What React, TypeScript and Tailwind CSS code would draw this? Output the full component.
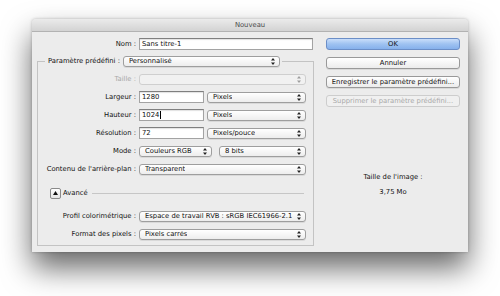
import clsx from "clsx"
import type { ReactNode } from "react"

function Arrows({ dim }: { dim?: boolean }) {
  return (
    <svg width="4" height="7" viewBox="0 0 4 7" className={dim ? "opacity-40" : ""}>
      <path d="M2 0 L4 2.5 L0 2.5 Z M2 7 L4 4.5 L0 4.5 Z" fill="#222" />
    </svg>
  )
}

function Select({ value, className, disabled }: { value?: string; className?: string; disabled?: boolean }) {
  return (
    <div
      className={clsx(
        "flex h-[11px] shrink-0 items-center justify-between rounded-[3px] border pl-[5px] pr-[4px]",
        disabled
          ? "border-[#cfcfcf] bg-[#f1f1f1] text-[#a6a6a6]"
          : "border-[#9e9e9e] bg-gradient-to-b from-white to-[#ededed] text-[#111] shadow-[0_1px_0_rgba(0,0,0,0.08)]",
        className
      )}
    >
      <span className="truncate">{value}</span>
      <Arrows dim={disabled} />
    </div>
  )
}

function Input({ value, className, caret }: { value: string; className?: string; caret?: boolean }) {
  return (
    <div
      className={clsx(
        "flex h-[12px] shrink-0 items-center border border-[#a3a3a3] border-t-[#7f7f7f] bg-white pl-[2px] text-[#111] shadow-[inset_0_1px_1px_rgba(0,0,0,0.12)]",
        className
      )}
    >
      {value}
      {caret && <span className="ml-px h-[8px] w-px bg-black" />}
    </div>
  )
}

function Row({ label, children, dim, className }: { label: string; children: ReactNode; dim?: boolean; className?: string }) {
  return (
    <div className={clsx("flex h-[18px] items-center", className)}>
      <div className={clsx("w-[101px] shrink-0 pr-[3px] text-right", dim ? "text-[#a8a8a8]" : "text-[#111]")}>{label}</div>
      {children}
    </div>
  )
}

function Button({ children, primary, disabled }: { children: ReactNode; primary?: boolean; disabled?: boolean }) {
  return (
    <div
      className={clsx(
        "mb-[7px] flex h-[12px] items-center justify-center whitespace-nowrap rounded-[3px] border",
        primary
          ? "border-[#6b8ec7] bg-gradient-to-b from-[#c9defa] via-[#9fc2f1] to-[#86b1ec] text-[#111]"
          : disabled
            ? "border-[#cdcdcd] bg-[#f0f0f0] text-[#a9a9a9]"
            : "border-[#999] bg-gradient-to-b from-white to-[#ececec] text-[#111] shadow-[0_1px_0_rgba(0,0,0,0.08)]"
      )}
    >
      {children}
    </div>
  )
}

export default function App() {
  return (
    <div className="h-[296px] w-[500px] overflow-hidden bg-white pl-[32px] pt-[19px] text-[6.8px] leading-none" style={{ fontFamily: '"DejaVu Sans", Verdana, sans-serif' }}>
      <div className="flex h-[233px] w-[436px] flex-col rounded-t-[4px] bg-[#ececec] shadow-[0_16px_30px_rgba(0,0,0,0.6),0_0_3px_rgba(0,0,0,0.25)]">
        {/* Title bar */}
        <div className="flex h-[13px] items-center justify-center rounded-t-[4px] border-b border-[#b2b2b2] bg-gradient-to-b from-[#ebebeb] to-[#d3d3d3] text-[#4a4a4a]">
          Nouveau
        </div>

        <div className="flex flex-1 pl-[5px]">
          {/* Left column */}
          <div className="w-[277px] shrink-0">
            <div className="mt-[3px] flex h-[18px] items-center">
              <div className="w-[102px] shrink-0 pr-[3px] text-right text-[#111]">Nom :</div>
              <Input value="Sans titre-1" className="w-[174px]" />
            </div>

            <div className="mt-[8px] w-[277px] border border-[#c3c3c3] pb-[2px]">
              <div className="-mt-[7px] ml-[7px] flex h-[12px] w-fit items-center bg-[#ececec] px-[3px] pr-[2px]">
                <span className="text-[#111]">Paramètre prédéfini :</span>
                <Select value="Personnalisé" className="ml-[3px] w-[157px]" />
              </div>

              <Row label="Taille :" dim className="mt-[3px]">
                <Select disabled className="w-[167px]" />
              </Row>
              <Row label="Largeur :">
                <Input value="1280" className="w-[65px]" />
                <Select value="Pixels" className="ml-[3px] w-[99px]" />
              </Row>
              <Row label="Hauteur :">
                <Input value="1024" caret className="w-[65px]" />
                <Select value="Pixels" className="ml-[3px] w-[99px]" />
              </Row>
              <Row label="Résolution :">
                <Input value="72" className="w-[65px]" />
                <Select value="Pixels/pouce" className="ml-[3px] w-[99px]" />
              </Row>
              <Row label="Mode :">
                <Select value="Couleurs RGB" className="w-[73px]" />
                <Select value="8 bits" className="ml-[7px] w-[87px]" />
              </Row>
              <Row label="Contenu de l'arrière-plan :">
                <Select value="Transparent" className="w-[167px]" />
              </Row>

              <div className="mt-[6px] flex h-[18px] items-center">
                <div className="ml-[12px] flex h-[11px] w-[11px] items-center justify-center rounded-[2px] border border-[#8a8a8a] bg-gradient-to-b from-white to-[#e4e4e4]">
                  <svg width="5" height="4" viewBox="0 0 5 4">
                    <path d="M2.5 0 L5 4 L0 4 Z" fill="#111" />
                  </svg>
                </div>
                <span className="ml-[2px] text-[#111]">Avancé</span>
                <div className="ml-[4px] mr-[9px] h-px flex-1 bg-[#c6c6c6]" />
              </div>

              <Row label="Profil colorimétrique :" className="mt-[5px]">
                <Select value="Espace de travail RVB : sRGB IEC61966-2.1" className="w-[167px]" />
              </Row>
              <Row label="Format des pixels :">
                <Select value="Pixels carrés" className="w-[167px]" />
              </Row>
            </div>
          </div>

          {/* Right column */}
          <div className="ml-[12px] w-[134px] shrink-0 pt-[6px]">
            <Button primary>OK</Button>
            <Button>Annuler</Button>
            <Button>Enregistrer le paramètre prédéfini...</Button>
            <Button disabled>Supprimer le paramètre prédéfini...</Button>
            <div className="mt-[65px] text-center leading-[10px] text-[#111]">Taille de l'image :</div>
            <div className="mt-[5px] text-center leading-[10px] text-[#111]">3,75 Mo</div>
          </div>
        </div>
      </div>
    </div>
  )
}
